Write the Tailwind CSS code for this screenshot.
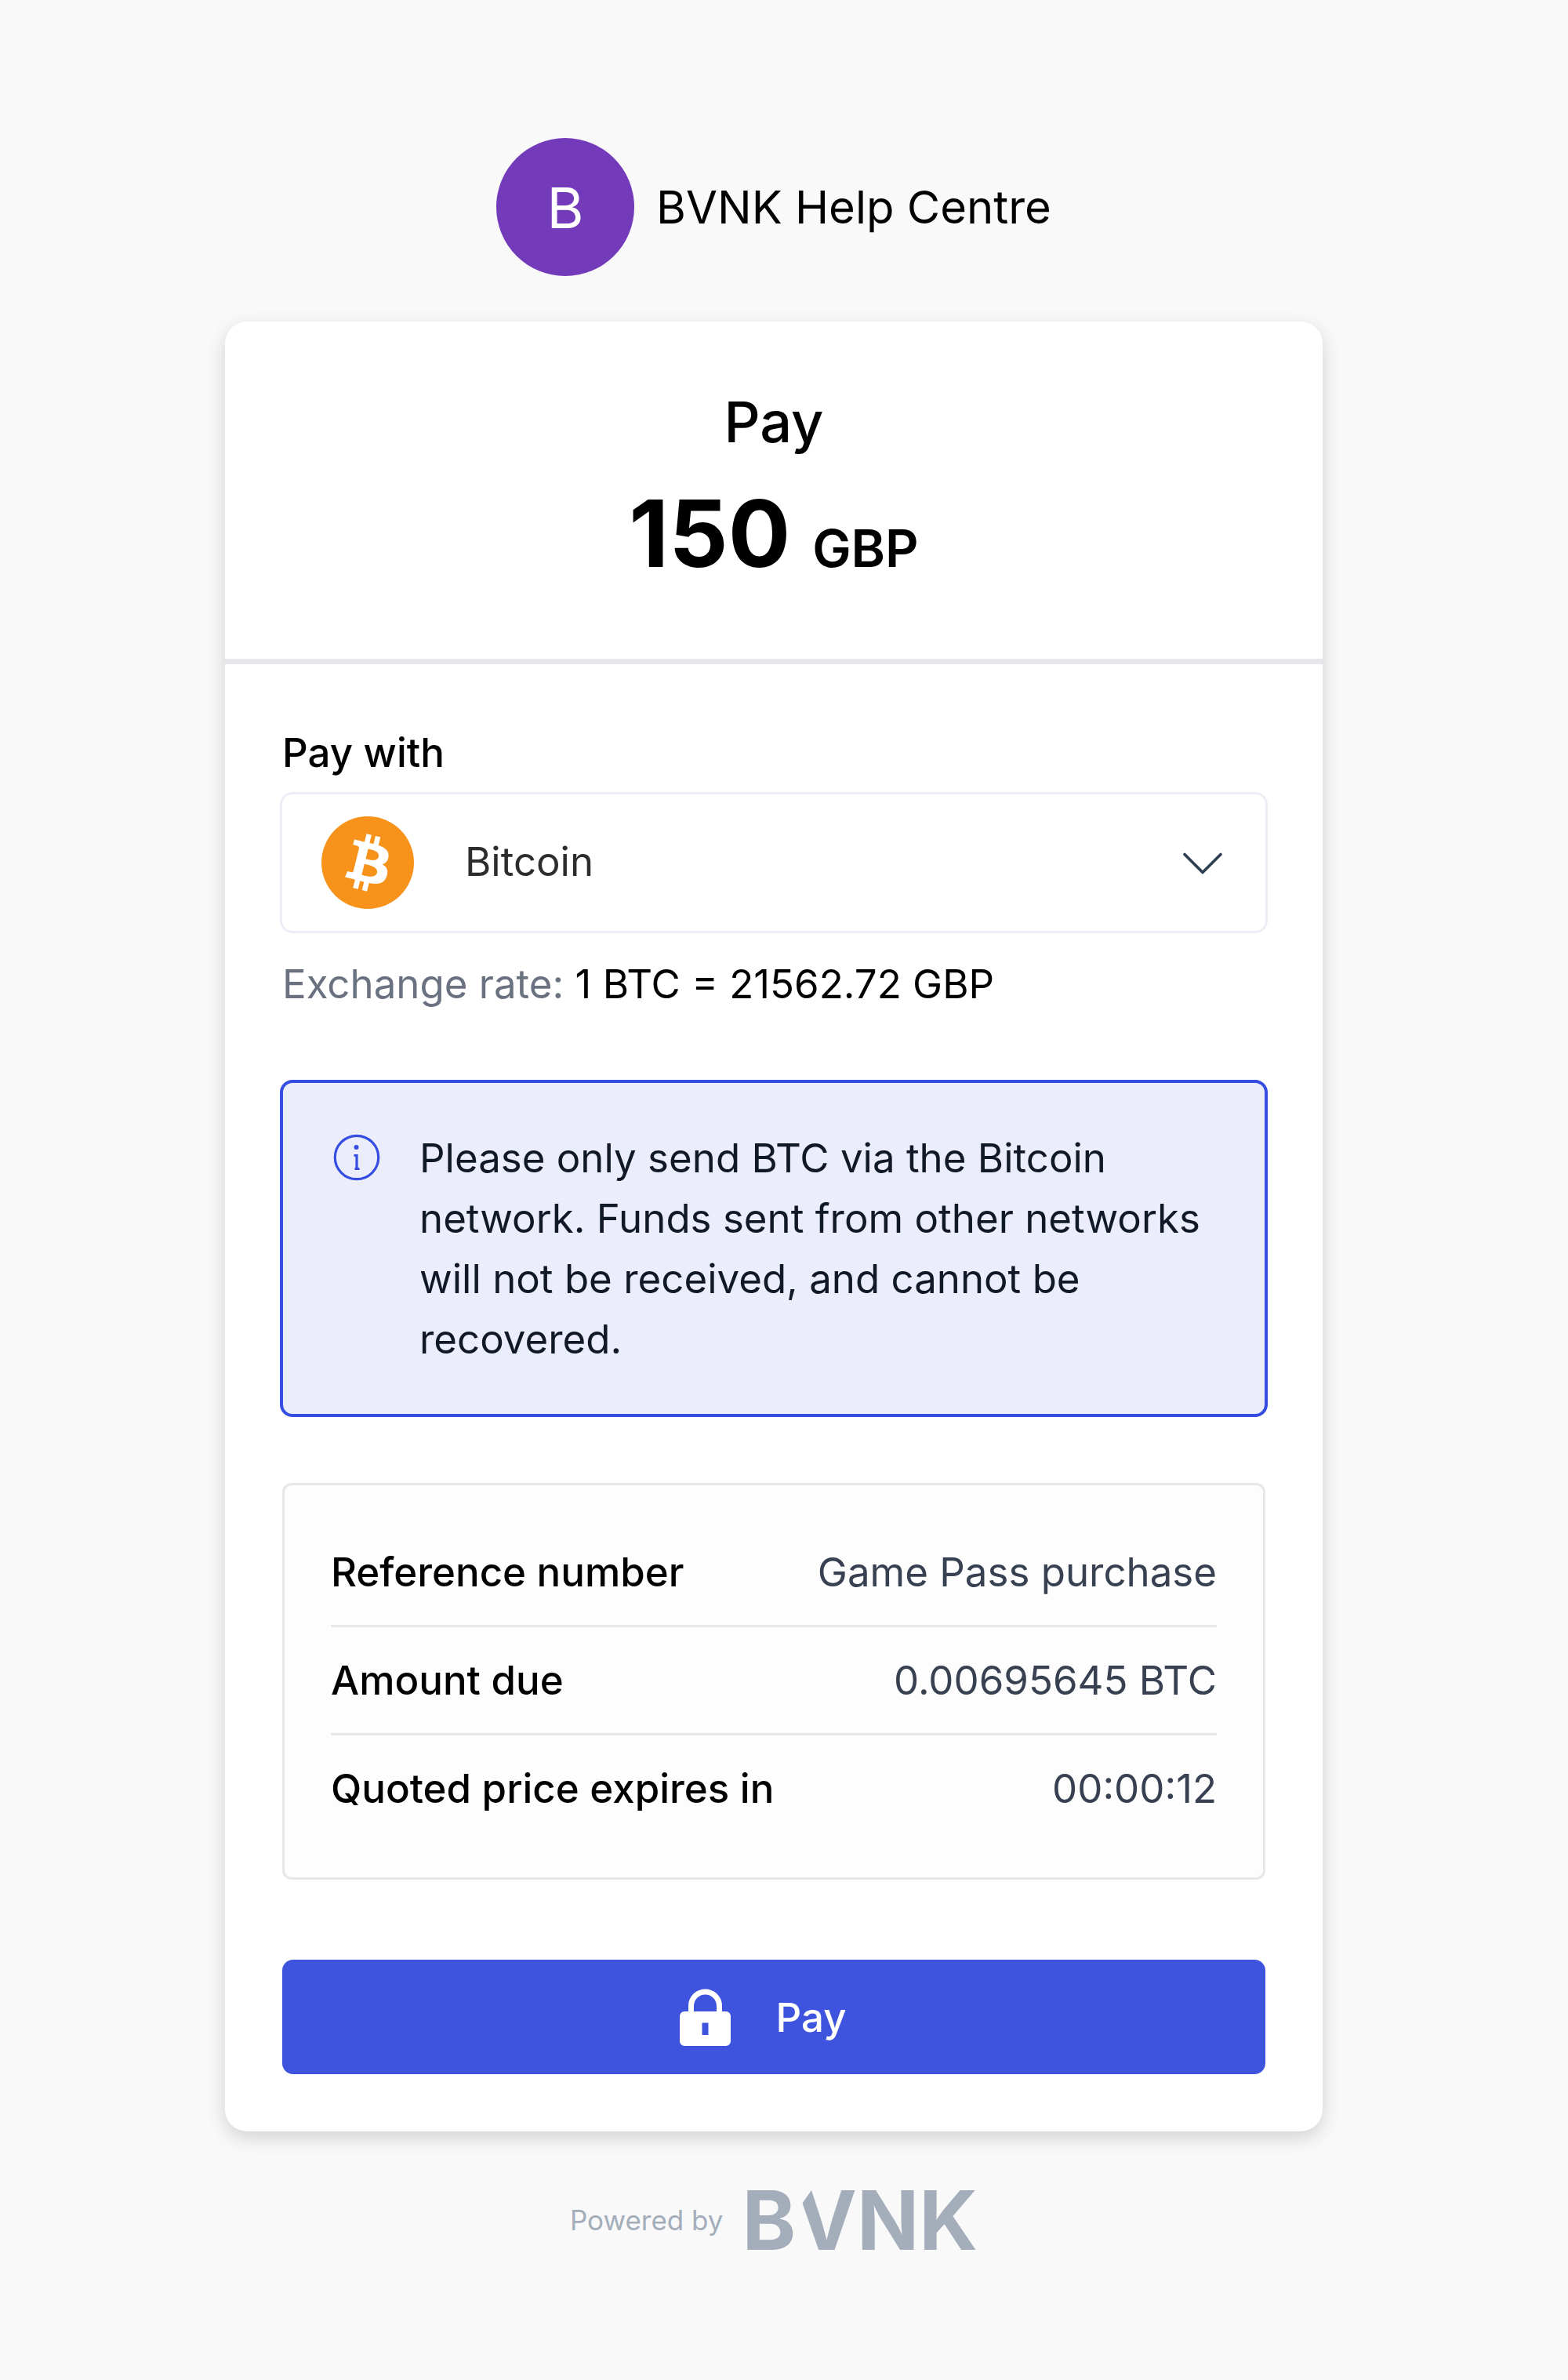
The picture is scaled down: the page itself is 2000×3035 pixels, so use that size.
<!DOCTYPE html>
<html lang="en">
<head>
    <meta charset="UTF-8">
    <meta name="viewport" content="width=device-width, initial-scale=1.0">
    <title>BVNK Help Centre - Pay</title>
    <script src="https://cdn.jsdelivr.net/npm/@tailwindcss/browser@4"></script>
</head>
<body class="bg-[#f9f9f9] min-h-screen font-['Inter',sans-serif] text-[51px] leading-[77px] text-black">

    <div class="flex flex-col items-center pt-[176px] pb-16 pl-4 pr-[42px]">

        <!-- Merchant -->
        <header class="flex items-center gap-7">
            <div class="size-[176px] rounded-full bg-[#733ab9] text-white text-[72px] flex items-center justify-center">B</div>
            <h1 class="text-[58px]">BVNK Help Centre</h1>
        </header>

        <main class="w-full max-w-[1400px] mt-[58px] bg-white rounded-[28px] shadow-[0_8px_24px_rgba(0,0,0,0.16)]">
            <!-- Amount -->
            <section class="pt-[84px] pb-[88px] text-center border-b-[7px] border-[#e5e7eb]">
                <h2 class="text-[72px] leading-[88px] font-medium">Pay</h2>
                <p class="mt-[26px] text-[118px] leading-[144px] font-bold">150 <span class="text-[66px] leading-none font-semibold">GBP</span></p>
            </section>

            <form class="px-[70px] pt-[74px] pb-[73px]">
                <!-- Currency -->
                <label for="currency" class="block px-[3px] font-medium">Pay with</label>
                <div class="relative mt-3">
                    <select id="currency" class="w-full h-[180px] appearance-none bg-white border-3 border-[#ebeff5] rounded-2xl pl-[233px] pr-32 pb-1 text-[#2b2d2f]">
                        <option>Bitcoin</option>
                    </select>
                    <svg class="absolute left-[53px] top-[31px] size-[118px] pointer-events-none" viewBox="0 0 32 32" aria-hidden="true">
                        <circle cx="16" cy="16" r="16" fill="#f7931a"/>
                        <path fill="#fff" d="M23.189 14.02c.314-2.096-1.283-3.223-3.465-3.975l.708-2.84-1.728-.43-.69 2.765c-.454-.114-.92-.22-1.385-.326l.695-2.783L15.596 6l-.708 2.839c-.376-.086-.746-.17-1.104-.26l.002-.009-2.384-.595-.46 1.846s1.283.294 1.256.312c.7.175.826.638.805 1.006l-.806 3.235c.048.012.11.03.18.057l-.183-.045-1.13 4.532c-.086.212-.303.531-.793.41.018.025-1.256-.313-1.256-.313l-.858 1.978 2.25.561c.418.105.828.215 1.231.318l-.715 2.872 1.727.43.708-2.84c.472.127.93.245 1.378.357l-.706 2.828 1.728.43.715-2.866c2.948.558 5.164.333 6.097-2.333.752-2.146-.037-3.385-1.588-4.192 1.13-.26 1.98-1.003 2.207-2.538zm-3.95 5.538c-.533 2.147-4.148.986-5.32.695l.95-3.805c1.172.293 4.929.872 4.37 3.11zm.535-5.569c-.487 1.953-3.495.96-4.47.717l.86-3.45c.975.243 4.118.696 3.61 2.733z"/>
                    </svg>
                    <svg class="absolute right-[58px] top-[77px] w-[50px] h-7 pointer-events-none" viewBox="0 0 50 28" fill="none" stroke="#2d3e50" stroke-width="3.6" stroke-linecap="round" stroke-linejoin="round" aria-hidden="true">
                        <path d="M2 2.5l23 23 23-23"/>
                    </svg>
                </div>
                <p class="mt-[26px] px-[3px]"><span class="text-gray-500">Exchange rate:</span> 1 BTC = 21562.72 GBP</p>

                <!-- Network notice -->
                <div role="note" class="mt-[84px] flex gap-[50px] rounded-2xl border-4 border-[#354de1] bg-[#ebedfb] py-[57px] px-16 text-[#111827]">
                    <svg class="mt-2 size-[60px] shrink-0" viewBox="0 0 60 60" fill="none" stroke="#354de1" stroke-width="3.2" aria-hidden="true">
                        <circle cx="30" cy="30" r="27.7"/>
                        <circle cx="29.5" cy="17" r="3" fill="#354de1" stroke="none"/>
                        <path d="M26.500 27.500h3.500v17M27.500 44.500h6"/>
                    </svg>
                    <p>Please only send BTC via the Bitcoin network. Funds sent from other networks will not be received, and cannot be recovered.</p>
                </div>

                <!-- Payment details -->
                <dl class="mx-[3px] mt-[84px] rounded-xl border-3 border-[#e5e7eb] bg-[#fdfdfd] px-[59px] pt-[43px] pb-[46px] divide-y-3 divide-[#e5e7eb]">
                    <div class="flex justify-between gap-6 py-[29px]">
                        <dt class="font-medium">Reference number</dt>
                        <dd class="text-[#374151]">Game Pass purchase</dd>
                    </div>
                    <div class="flex justify-between gap-6 py-[29px]">
                        <dt class="font-medium">Amount due</dt>
                        <dd class="text-[#374151]">0.00695645 BTC</dd>
                    </div>
                    <div class="flex justify-between gap-6 py-[29px]">
                        <dt class="font-medium">Quoted price expires in</dt>
                        <dd class="text-[#374151]">00:00:12</dd>
                    </div>
                </dl>

                <div class="mx-[3px] mt-[102px]">
                    <button type="button" class="w-full h-[146px] pr-7 rounded-[14px] bg-[#3e53de] text-white font-medium flex items-center justify-center gap-[58px]">
                        <svg class="w-[65px] h-[73px]" viewBox="0 0 65 73" aria-hidden="true">
                            <path d="M14.500 32V22a18 18 0 0 1 36 0v10" fill="none" stroke="#fff" stroke-width="7"/>
                            <path fill="#fff" fill-rule="evenodd" d="M6 29h53a6 6 0 0 1 6 6v32a6 6 0 0 1-6 6H6a6 6 0 0 1-6-6V35a6 6 0 0 1 6-6zM28.500 43.500v15.500h8V43.500z"/>
                        </svg>
                        Pay
                    </button>
                </div>
            </form>
        </main>

        <footer class="mt-[63px] flex items-center gap-6 text-[#a4aebb]">
            <span class="text-[35px]">Powered by</span>
            <span class="relative text-[104px] leading-[100px] font-bold">
                BVNK
                <!-- slanted cut on the V -->
                <svg class="absolute left-0 top-0 size-[100px]" viewBox="0 0 100 100" aria-hidden="true">
                    <path d="M68 8h20v4L74 32h-6z" fill="#f9f9f9"/>
                </svg>
            </span>
        </footer>
    </div>

</body>
</html>
